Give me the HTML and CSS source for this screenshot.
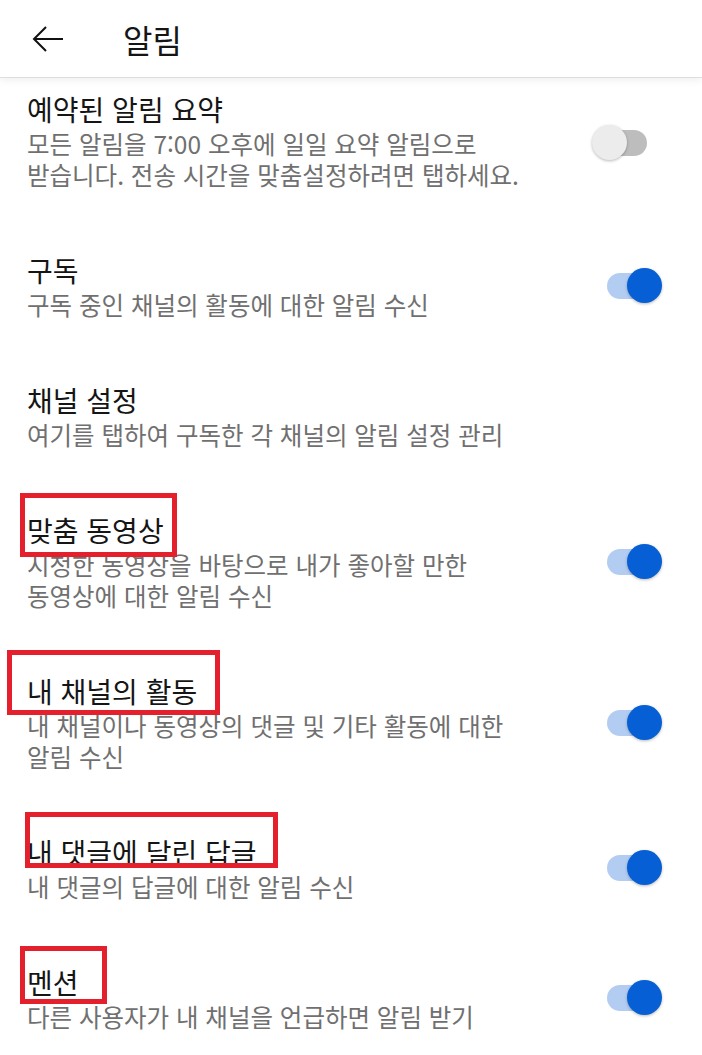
FILE: index.html
```html
<!DOCTYPE html>
<html lang="ko">
<head>
    <meta charset="utf-8">
    <title>알림</title>
    <link rel="stylesheet" href="styles.css">
</head>
<body>
    <header class="topbar">
        <svg class="back" width="32" height="28" viewBox="0 0 32 28">
            <path d="M31 14H2M14 2L2 14l12 12" fill="none" stroke="#111" stroke-width="2"/>
        </svg>
        <h1 class="topbar-title">알림</h1>
    </header>

    <ul class="settings">
        <li class="row">
            <div class="text">
                <div class="title">예약된 알림 요약</div>
                <div class="desc">모든 알림을 7:00 오후에 일일 요약 알림으로<br>받습니다. 전송 시간을 맞춤설정하려면 탭하세요.</div>
            </div>
            <span class="switch"></span>
        </li>
        <li class="row">
            <div class="text">
                <div class="title">구독</div>
                <div class="desc">구독 중인 채널의 활동에 대한 알림 수신</div>
            </div>
            <span class="switch on"></span>
        </li>
        <li class="row">
            <div class="text">
                <div class="title">채널 설정</div>
                <div class="desc">여기를 탭하여 구독한 각 채널의 알림 설정 관리</div>
            </div>
        </li>
        <li class="row">
            <div class="text">
                <div class="title">맞춤 동영상<span class="mark mark-a"></span></div>
                <div class="desc">시청한 동영상을 바탕으로 내가 좋아할 만한<br>동영상에 대한 알림 수신</div>
            </div>
            <span class="switch on"></span>
        </li>
        <li class="row">
            <div class="text">
                <div class="title">내 채널의 활동<span class="mark mark-b"></span></div>
                <div class="desc">내 채널이나 동영상의 댓글 및 기타 활동에 대한<br>알림 수신</div>
            </div>
            <span class="switch on"></span>
        </li>
        <li class="row">
            <div class="text">
                <div class="title">내 댓글에 달린 답글<span class="mark mark-c"></span></div>
                <div class="desc">내 댓글의 답글에 대한 알림 수신</div>
            </div>
            <span class="switch on"></span>
        </li>
        <li class="row">
            <div class="text">
                <div class="title">멘션<span class="mark mark-d"></span></div>
                <div class="desc">다른 사용자가 내 채널을 언급하면 알림 받기</div>
            </div>
            <span class="switch on"></span>
        </li>
    </ul>
</body>
</html>
```

FILE: styles.css
```css
html, body {
    margin: 0;
    padding: 0;
    background: #fff;
    overflow: hidden;
}
body {
    font-family: "Noto Sans CJK KR", "Noto Sans", sans-serif;
    color: #151515;
}

/* top app bar */
.topbar {
    position: relative;
    z-index: 2;
    height: 77px;
    display: flex;
    align-items: center;
    padding-left: 32px;
    background: #fff;
    box-shadow: 0 1px 0 #dedede, 0 3px 8px rgba(0, 0, 0, 0.07);
}
.back {
    display: block;
    margin-top: 1px;
}
.topbar-title {
    margin: 0 0 0 59px;
    font-size: 32px;
    font-weight: 400;
    line-height: 1;
}

/* settings list */
.settings {
    list-style: none;
    margin: 0;
    padding: 0;
}
.row {
    display: flex;
    align-items: center;
    justify-content: space-between;
    padding: 31px 40px 31px 27px;
}
.row:first-child {
    padding-top: 14px;
}
.row:first-child .switch {
    margin-top: 4px;
}
.title {
    position: relative;
    font-size: 28px;
    line-height: 37px;
    color: #151515;
}
.desc {
    font-size: 24.5px;
    line-height: 31px;
    color: #707070;
}

/* toggle switch */
.switch {
    position: relative;
    flex: none;
    width: 70px;
    height: 36px;
}
.switch::before {
    content: "";
    position: absolute;
    left: 15px;
    top: 5px;
    width: 40px;
    height: 26px;
    border-radius: 13px;
    background: #bdbdbd;
}
.switch::after {
    content: "";
    position: absolute;
    left: 0;
    top: 0;
    width: 35px;
    height: 35px;
    border-radius: 50%;
    background: #ececec;
    box-shadow: 0 1px 3px rgba(0, 0, 0, 0.28);
}
.switch.on::before {
    background: #b3cdf2;
}
.switch.on::after {
    left: 35px;
    background: #065fd4;
}

/* red highlight boxes drawn over titles */
.mark {
    position: absolute;
    border: 5px solid #e3202b;
    box-sizing: border-box;
}
.mark-a { left: -7px;  top: -19px; width: 157px; height: 64px; }
.mark-b { left: -20px; top: -23px; width: 213px; height: 65px; }
.mark-c { left: -2px;  top: -22px; width: 253px; height: 56px; }
.mark-d { left: -7px;  top: -18px; width: 87px;  height: 58px; }
```
